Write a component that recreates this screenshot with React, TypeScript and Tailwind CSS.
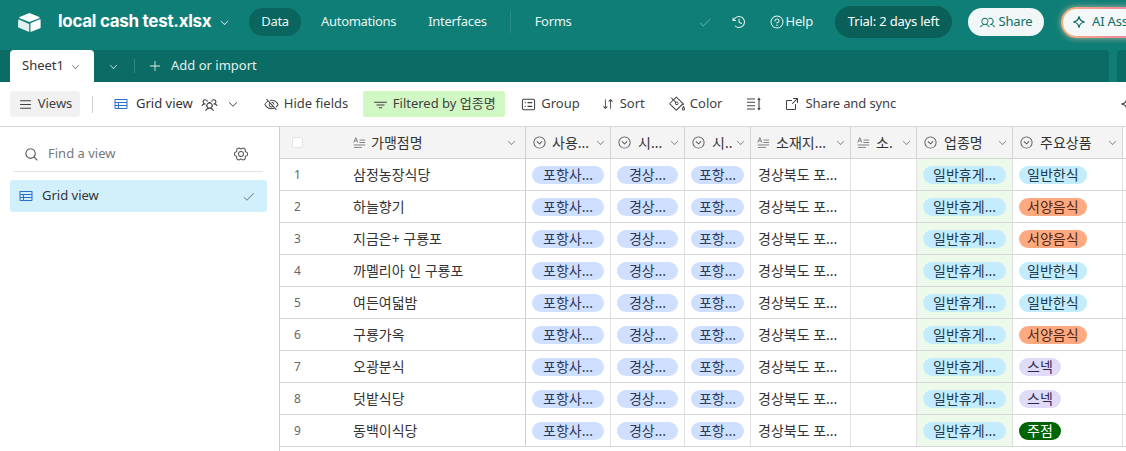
import type { ReactNode } from "react";
import {
  PiArrowSquareOut,
  PiArrowsDownUp,
  PiCaretCircleDown,
  PiCaretDown,
  PiCheck,
  PiClockCounterClockwise,
  PiEyeSlash,
  PiFunnelSimple,
  PiGearSix,
  PiList,
  PiMagnifyingGlass,
  PiPaintBucket,
  PiPlus,
  PiQuestion,
  PiTable,
  PiUsers,
  PiUsersThree,
} from "react-icons/pi";

/* ---- data ---- */

const cols = ["w-[246px]", "w-[85px]", "w-[74px]", "w-[66px]", "w-[100px]", "w-[66px]", "w-[96px]", "w-[110px]"];

const rows = [
  { name: "삼정농장식당", food: "일반한식", tone: "bg-[#c4ecff] text-[#1c3a4c]" },
  { name: "하늘향기", food: "서양음식", tone: "bg-[#ffa981] text-[#4a2a18]" },
  { name: "지금은+ 구룡포", food: "서양음식", tone: "bg-[#ffa981] text-[#4a2a18]" },
  { name: "까멜리아 인 구룡포", food: "일반한식", tone: "bg-[#c4ecff] text-[#1c3a4c]" },
  { name: "여든여덟밤", food: "일반한식", tone: "bg-[#c4ecff] text-[#1c3a4c]" },
  { name: "구룡가옥", food: "서양음식", tone: "bg-[#ffa981] text-[#4a2a18]" },
  { name: "오광분식", food: "스넥", tone: "bg-[#e0dcf8] text-[#2c2555]" },
  { name: "덧밭식당", food: "스넥", tone: "bg-[#e0dcf8] text-[#2c2555]" },
  { name: "동백이식당", food: "주점", tone: "bg-[#006400] text-white" },
];

/* ---- small bits ---- */

function Logo() {
  return (
    <svg viewBox="0 0 24 20" className="w-[23px] h-[19px] shrink-0">
      <path d="M10.6 0.6 1.6 4.3c-.5.2-.5.9 0 1.1l9.1 3.6c.8.3 1.7.3 2.500 0l9.1-3.6c.5-.2.5-.9 0-1.1L13.3.6c-.9-.3-1.8-.3-2.7 0z" fill="#fff" />
      <path d="M13 11v8.2c0 .4.4.7.8.5l9.4-3.7c.3-.1.5-.4.5-.7V7.2c0-.4-.4-.7-.8-.5l-9.4 3.7c-.3.1-.5.3-.5.6z" fill="#fff" />
      <path d="M10.9 11.2 0.9 6.8C.5 6.6 0 6.9 0 7.4v7.3c0 .3.1.5.4.6l10.6 4.4c.4.2.7-.1.7-.5v-7.2c0-.4-.4-.7-.8-.8z" fill="#e4f0ef" />
    </svg>
  );
}

function Sparkle({ className }: { className: string }) {
  return (
    <svg viewBox="0 0 16 16" className={className} fill="none" stroke="currentColor" strokeWidth="1.400">
      <path d="M8 1.500C8.500 5.500 10.500 7.500 14.500 8C10.500 8.500 8.500 10.500 8 14.500C7.500 10.500 5.500 8.500 1.500 8C5.500 7.500 7.500 5.500 8 1.500z" />
    </svg>
  );
}

function LongTextIcon() {
  return (
    <svg viewBox="0 0 16 16" className="w-[13px] h-[13px] shrink-0 text-[#6b6b6b]" fill="none" stroke="currentColor" strokeWidth="1">
      <path d="M1 8 3.500 2 6 8M2 6h3M8 5h7M8 8h7M1 11h14M1 14h10" />
    </svg>
  );
}

function ToolItem({ icon, children, className = "" }: { icon: ReactNode; children?: ReactNode; className?: string }) {
  return (
    <div className={`flex items-center gap-[5px] text-[13px] text-[#3f3f3f] whitespace-nowrap shrink-0 ${className}`}>
      {icon}
      {children && <span>{children}</span>}
    </div>
  );
}

function HeaderCell({ width, icon, label, gap = "gap-[6px]" }: { width: string; icon: ReactNode; label: string; gap?: string }) {
  return (
    <div className={`${width} bg-[#f4f4f4] shrink-0 h-full border-r border-[#d4d4d4] flex items-center pl-[6px] pr-[4px]`}>
      <div className={`flex items-center ${gap} min-w-0 flex-1 text-[14px] text-[#333] whitespace-nowrap`}>
        {icon}
        <span>{label}</span>
      </div>
      <PiCaretDown className="w-[11px] h-[11px] text-[#777] shrink-0" />
    </div>
  );
}

function Pill({ text, className }: { text: string; className: string }) {
  return <span className={`h-[18px] rounded-full flex items-center justify-center text-[14px] leading-none whitespace-nowrap ${className}`}>{text}</span>;
}

function Row({ n, name, food, tone }: { n: number; name: string; food: string; tone: string }) {
  return (
    <div className="h-[32px] flex border-b border-[#d8d8d8] text-[14px] text-[#333]">
      <div className={`${cols[0]} shrink-0 flex items-center border-r border-[#cfcfcf]`}>
        <span className="w-[73px] pl-[14px] text-[12px] text-[#666]">{n}</span>
        <span className="whitespace-nowrap">{name}</span>
      </div>
      <div className={`${cols[1]} shrink-0 flex items-center pl-[6px] border-r border-[#e0e0e0]`}>
        <Pill text="포항사..." className="w-[72px] bg-[#cfdfff] text-[#2c3a5c]" />
      </div>
      <div className={`${cols[2]} shrink-0 flex items-center pl-[6px] border-r border-[#e0e0e0]`}>
        <Pill text="경상..." className="w-[61px] bg-[#cfdfff] text-[#2c3a5c]" />
      </div>
      <div className={`${cols[3]} shrink-0 flex items-center pl-[6px] border-r border-[#e0e0e0]`}>
        <Pill text="포항..." className="w-[53px] bg-[#cfdfff] text-[#2c3a5c]" />
      </div>
      <div className={`${cols[4]} shrink-0 flex items-center pl-[7px] border-r border-[#e0e0e0] whitespace-nowrap`}>경상북도 포...</div>
      <div className={`${cols[5]} shrink-0 border-r border-[#e0e0e0]`} />
      <div className={`${cols[6]} shrink-0 flex items-center pl-[6px] bg-[#edf9ea] border-r border-[#e0e0e0]`}>
        <Pill text="일반휴게..." className="w-[83px] bg-[#c4ecff] text-[#1c3a4c]" />
      </div>
      <div className={`${cols[7]} shrink-0 flex items-center pl-[6px] border-r border-[#e0e0e0]`}>
        <Pill text={food} className={`px-[8px] ${tone}`} />
      </div>
    </div>
  );
}

/* ---- page ---- */

export default function App() {
  const selectIcon = <PiCaretCircleDown className="w-[15px] h-[15px] shrink-0 text-[#555]" />;

  return (
    <div className="w-[1126px] h-[451px] overflow-hidden bg-white flex flex-col font-['Noto_Sans','Noto_Sans_CJK_KR',sans-serif]">
      {/* top bar */}
      <header className="h-[50px] shrink-0 bg-[#0f7e76] flex items-center text-white pl-[18px] pb-[6px]">
        <Logo />
        <span className="ml-[17px] w-[154px] text-[17px] font-bold font-['Inter',sans-serif] tracking-[-0.3px] whitespace-nowrap shrink-0">local cash test.xlsx</span>
        <PiCaretDown className="ml-[7px] w-[11px] h-[11px] shrink-0" />
        <nav className="ml-[19px] flex items-center text-[13px] tracking-[-0.3px] text-[#e8f3f2] whitespace-nowrap shrink-0">
          <span className="w-[52px] h-[28px] rounded-full bg-[#0b655f] flex items-center justify-center">Data</span>
          <span className="ml-[20px]">Automations</span>
          <span className="ml-[32px]">Interfaces</span>
          <span className="ml-[23px] w-px h-[22px] bg-[#2b8f88]" />
          <span className="ml-[24px]">Forms</span>
        </nav>
        <PiCheck className="ml-[126px] w-[14px] h-[14px] text-[#5fa9a4] shrink-0" />
        <PiClockCounterClockwise className="ml-[19px] w-[16px] h-[16px] shrink-0 text-[#e8f3f2]" />
        <PiQuestion className="ml-[22px] w-[16px] h-[16px] shrink-0 text-[#e8f3f2]" />
        <span className="ml-[1px] text-[13px] tracking-[-0.2px] text-[#e8f3f2] shrink-0">Help</span>
        <span className="ml-[22px] w-[117px] h-[32px] rounded-full bg-[#0b5f59] flex items-center justify-center text-[13px] tracking-[-0.2px] whitespace-nowrap shrink-0">Trial: 2 days left</span>
        <span className="ml-[16px] w-[76px] h-[28px] rounded-full bg-[#f1f7f6] text-[#0f6e68] flex items-center justify-center gap-[4px] text-[13px] tracking-[-0.2px] shrink-0">
          <PiUsers className="w-[15px] h-[15px]" />
          Share
        </span>
        <span className="ml-[17px] w-[124px] h-[31px] rounded-full bg-[linear-gradient(90deg,#f7b27a,#f08a9c_45%,#b79cf0)] p-[2px] shrink-0 shadow-[0_0_6px_rgba(255,205,175,0.7)]">
          <span className="w-full h-full rounded-full bg-[#f4f8f8] text-[#0f6e68] flex items-center gap-[6px] pl-[9px] text-[13px] tracking-[-0.2px] whitespace-nowrap">
            <Sparkle className="w-[14px] h-[14px]" />
            AI Assistant
          </span>
        </span>
      </header>

      {/* sheet tabs */}
      <div className="h-[32px] shrink-0 bg-[#0f7e76] flex">
        <div className="flex-1 bg-[#0b6b65] flex items-stretch pl-[10px] rounded-tr-[4px]">
          <div className="w-[84px] bg-white rounded-t-[4px] flex items-center pl-[12px] gap-[6px] text-[13px] text-[#333]">
            Sheet1
            <PiCaretDown className="w-[11px] h-[11px] text-[#666]" />
          </div>
          <div className="flex items-center text-[#e3efee] text-[13px]">
            <PiCaretDown className="ml-[14px] w-[11px] h-[11px]" />
            <span className="ml-[15px] w-px h-[14px] bg-[#2f8a84]" />
            <PiPlus className="ml-[13px] w-[14px] h-[14px]" />
            <span className="ml-[9px] whitespace-nowrap">Add or import</span>
          </div>
        </div>
        <div className="w-[8px] shrink-0 bg-[#0f7e76]" />
        <div className="w-[9px] shrink-0 bg-[#0b6b65] rounded-tl-[4px]" />
      </div>

      {/* toolbar */}
      <div className="h-[45px] shrink-0 flex items-center border-b border-[#d8d8d8] pl-[10px]">
        <ToolItem icon={<PiList className="w-[15px] h-[15px]" />} className="w-[70px] h-[26px] rounded-[3px] bg-[#f1f1f1] justify-center gap-[3px]">
          Views
        </ToolItem>
        <span className="ml-[12px] w-px h-[17px] bg-[#d0d0d0] shrink-0" />
        <PiTable className="ml-[20px] w-[16px] h-[16px] text-[#2d6fd0] shrink-0" />
        <span className="ml-[7px] text-[13px] text-[#333] whitespace-nowrap shrink-0">Grid view</span>
        <PiUsersThree className="ml-[8px] w-[17px] h-[17px] text-[#444] shrink-0" />
        <PiCaretDown className="ml-[9px] w-[12px] h-[12px] text-[#444] shrink-0" />
        <ToolItem icon={<PiEyeSlash className="w-[15px] h-[15px]" />} className="ml-[25px]">
          Hide fields
        </ToolItem>
        <ToolItem icon={<PiFunnelSimple className="w-[15px] h-[15px]" />} className="ml-[15px] w-[142px] h-[26px] rounded-[3px] bg-[#d1f7c4] justify-center">
          Filtered by 업종명
        </ToolItem>
        <ToolItem
          icon={
            <svg viewBox="0 0 16 16" className="w-[15px] h-[15px]" fill="none" stroke="currentColor" strokeWidth="1.100">
              <rect x="1.500" y="2.500" width="13" height="11" rx="1.500" />
              <path d="M4 6h1M7 6h5M4 10h1M7 10h5" />
            </svg>
          }
          className="ml-[16px]"
        >
          Group
        </ToolItem>
        <ToolItem icon={<PiArrowsDownUp className="w-[14px] h-[14px]" />} className="ml-[21px]">
          Sort
        </ToolItem>
        <ToolItem icon={<PiPaintBucket className="w-[16px] h-[16px]" />} className="ml-[24px] gap-[2px]">
          Color
        </ToolItem>
        <svg viewBox="0 0 16 16" className="ml-[24px] w-[16px] h-[16px] shrink-0 text-[#444]" fill="none" stroke="currentColor" strokeWidth="1.100">
          <path d="M1 3h8M1 6.300h8M1 9.700h8M1 13h8M13 2.500v11M11.800 4l1.200-1.500L14.200 4M11.800 12l1.200 1.500 1.200-1.500" />
        </svg>
        <ToolItem icon={<PiArrowSquareOut className="w-[16px] h-[16px]" />} className="ml-[22px] tracking-[-0.1px]">
          Share and sync
        </ToolItem>
        <Sparkle className="ml-[224px] w-[14px] h-[14px] shrink-0 text-[#444]" />
      </div>

      <div className="flex-1 min-h-0 flex">
        {/* views sidebar */}
        <aside className="w-[280px] shrink-0 border-r border-[#cfcfcf] pl-[10px] pr-[12px] pt-[10px]">
          <div className="h-[35px] mx-[4px] flex items-center border-b border-[#e2e2e2] pl-[10px] pr-[14px] text-[13px] text-[#777]">
            <PiMagnifyingGlass className="w-[15px] h-[15px] text-[#444]" />
            <span className="ml-[9px]">Find a view</span>
            <PiGearSix className="ml-auto w-[16px] h-[16px] text-[#555]" />
          </div>
          <div className="mt-[8px] h-[32px] rounded-[3px] bg-[#d2effc] flex items-center pl-[8px] pr-[12px] text-[13px] text-[#333]">
            <PiTable className="w-[16px] h-[16px] text-[#2d6fd0]" />
            <span className="ml-[8px]">Grid view</span>
            <PiCheck className="ml-auto w-[13px] h-[13px] text-[#7a8a90]" />
          </div>
        </aside>

        {/* grid */}
        <main className="flex-1 min-w-0 overflow-hidden">
          <div className="w-[900px]">
            <div className="h-[32px] flex border-b border-[#d4d4d4]">
              <div className={`${cols[0]} shrink-0 bg-[#f4f4f4] border-r border-[#cfcfcf] flex items-center pr-[6px]`}>
                <span className="ml-[12px] w-[11px] h-[11px] rounded-[2px] bg-white border border-[#e4e4e4] shrink-0" />
                <span className="ml-[50px] flex items-center gap-[5px] text-[14px] text-[#333] flex-1">
                  <LongTextIcon />
                  가맹점명
                </span>
                <PiCaretDown className="w-[11px] h-[11px] text-[#777] mr-[2px]" />
              </div>
              <HeaderCell width={cols[1]} icon={selectIcon} label="사용..." gap="gap-[5px]" />
              <HeaderCell width={cols[2]} icon={selectIcon} label="시..." />
              <HeaderCell width={cols[3]} icon={selectIcon} label="시.." />
              <HeaderCell width={cols[4]} icon={<LongTextIcon />} label="소재지..." />
              <HeaderCell width={cols[5]} icon={<LongTextIcon />} label="소." />
              <HeaderCell width={cols[6]} icon={selectIcon} label="업종명" />
              <HeaderCell width={cols[7]} icon={selectIcon} label="주요상품" />
            </div>
            {rows.map((r, i) => (
              <Row key={r.name} n={i + 1} name={r.name} food={r.food} tone={r.tone} />
            ))}
          </div>
        </main>
      </div>
    </div>
  );
}
